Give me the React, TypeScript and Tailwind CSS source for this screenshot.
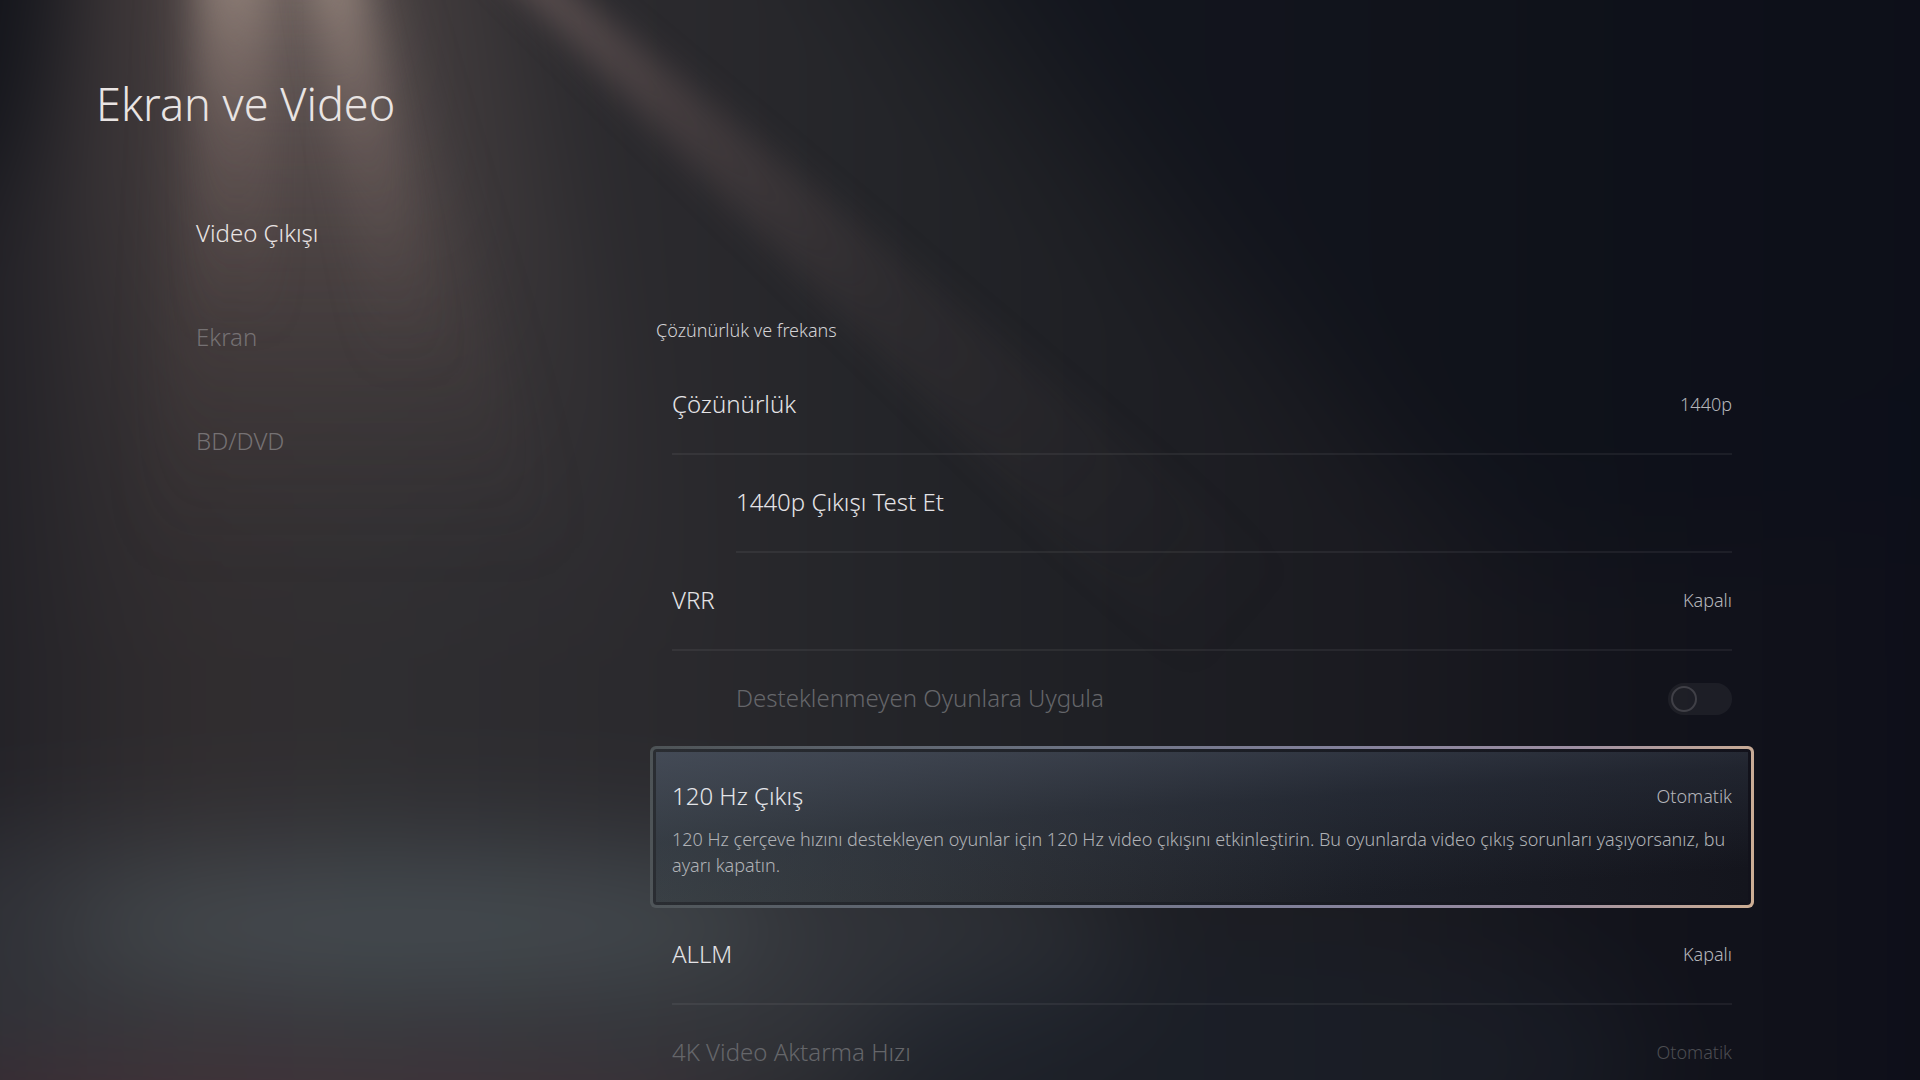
import { useState } from "react";
import { clsx } from "clsx";

type Setting = {
  id: string;
  label: string;
  value?: string;
  description?: string;
  indent?: boolean;
  disabled?: boolean;
  toggle?: boolean;
};

const TABS = [
  { id: "video-output", label: "Video Çıkışı" },
  { id: "screen", label: "Ekran" },
  { id: "bd-dvd", label: "BD/DVD" },
];

const SETTINGS: Setting[] = [
  { id: "resolution", label: "Çözünürlük", value: "1440p" },
  { id: "test-1440p", label: "1440p Çıkışı Test Et", indent: true },
  { id: "vrr", label: "VRR", value: "Kapalı" },
  {
    id: "unsupported",
    label: "Desteklenmeyen Oyunlara Uygula",
    indent: true,
    disabled: true,
    toggle: true,
  },
  {
    id: "hz120",
    label: "120 Hz Çıkış",
    value: "Otomatik",
    description:
      "120 Hz çerçeve hızını destekleyen oyunlar için 120 Hz video çıkışını etkinleştirin. Bu oyunlarda video çıkış sorunları yaşıyorsanız, bu ayarı kapatın.",
  },
  { id: "allm", label: "ALLM", value: "Kapalı" },
  {
    id: "transfer-rate",
    label: "4K Video Aktarma Hızı",
    value: "Otomatik",
    disabled: true,
  },
];

function Backdrop() {
  return (
    <svg
      className="absolute inset-0 h-full w-full"
      viewBox="0 0 1920 1080"
      preserveAspectRatio="none"
      aria-hidden
    >
      <defs>
        <linearGradient id="base" x1="0" y1="0" x2="1" y2="0">
          <stop offset="0.13" stopColor="#201f25" />
          <stop offset="0.17" stopColor="#29272b" />
          <stop offset="0.22" stopColor="#312d2f" />
          <stop offset="0.29" stopColor="#2f2e31" />
          <stop offset="0.4" stopColor="#2a292d" />
          <stop offset="0.47" stopColor="#242529" />
          <stop offset="0.56" stopColor="#1e1f24" />
          <stop offset="0.66" stopColor="#1a1a20" />
          <stop offset="0.75" stopColor="#12131b" />
          <stop offset="0.84" stopColor="#0f101a" />
          <stop offset="0.88" stopColor="#0b0c18" />
        </linearGradient>
        <linearGradient id="lamp" x1="0" y1="0" x2="0" y2="1">
          <stop offset="0" stopColor="#b09c92" stopOpacity="0.48" />
          <stop offset="0.3" stopColor="#907c76" stopOpacity="0.3" />
          <stop offset="0.6" stopColor="#705c58" stopOpacity="0.2" />
          <stop offset="1" stopColor="#5a4a48" stopOpacity="0" />
        </linearGradient>
        <linearGradient id="streak" x1="0" y1="0" x2="0" y2="1">
          <stop offset="0" stopColor="#b8a598" stopOpacity="0.5" />
          <stop offset="0.5" stopColor="#967f78" stopOpacity="0.18" />
          <stop offset="1" stopColor="#7a6662" stopOpacity="0" />
        </linearGradient>
        <linearGradient id="halo" x1="0" y1="0" x2="0" y2="1">
          <stop offset="0" stopColor="#6b5a57" stopOpacity="0.4" />
          <stop offset="0.5" stopColor="#5c504f" stopOpacity="0.3" />
          <stop offset="1" stopColor="#4a4343" stopOpacity="0" />
        </linearGradient>
        <linearGradient
          id="beam"
          gradientUnits="userSpaceOnUse"
          x1="520"
          y1="0"
          x2="1240"
          y2="640"
        >
          <stop offset="0" stopColor="#8a7370" stopOpacity="0.5" />
          <stop offset="0.2" stopColor="#7a6462" stopOpacity="0.32" />
          <stop offset="0.5" stopColor="#6a5656" stopOpacity="0.14" />
          <stop offset="1" stopColor="#5c4c4b" stopOpacity="0" />
        </linearGradient>
        <filter
          id="ambient"
          filterUnits="userSpaceOnUse"
          x="-400"
          y="-400"
          width="2720"
          height="1880"
          colorInterpolationFilters="sRGB"
        >
          <feGaussianBlur stdDeviation="50" />
        </filter>
        <filter
          id="soft"
          x="-50%"
          y="-50%"
          width="200%"
          height="200%"
          colorInterpolationFilters="sRGB"
        >
          <feGaussianBlur stdDeviation="26" />
        </filter>
        <filter
          id="thin"
          x="-100%"
          y="-50%"
          width="300%"
          height="200%"
          colorInterpolationFilters="sRGB"
        >
          <feGaussianBlur stdDeviation="16" />
        </filter>
      </defs>

      <g filter="url(#ambient)">
        <rect
          x="-400"
          y="-400"
          width="2720"
          height="1880"
          fill="url(#base)"
        />

        {/* night side and the dark upper corner */}
        <polygon
          points="560,-300 2300,-300 2300,300 1400,500"
          fill="#10131b"
          opacity="0.35"
        />
        <polygon
          points="760,-300 2300,-300 2300,500 1500,560"
          fill="#0b101b"
          opacity="0.45"
        />
        <polygon
          points="-300,-300 130,-300 30,120 -300,500"
          fill="#0d1017"
          opacity="0.75"
        />
        <polygon
          points="90,-200 440,-200 680,660 60,660"
          fill="url(#halo)"
        />

        {/* horizon glow */}
        <ellipse
          cx="400"
          cy="960"
          rx="740"
          ry="150"
          fill="#41454c"
          opacity="0.45"
        />
        <ellipse
          cx="420"
          cy="925"
          rx="360"
          ry="50"
          fill="#5a686c"
          opacity="0.45"
        />
        <ellipse
          cx="1250"
          cy="1060"
          rx="400"
          ry="120"
          fill="#1a2029"
          opacity="0.6"
        />
        <ellipse
          cx="180"
          cy="1140"
          rx="560"
          ry="70"
          fill="#52303a"
          opacity="0.5"
        />
      </g>

      {/* light from above */}
      <polygon
        points="195,-60 365,-60 560,560 150,560"
        fill="url(#lamp)"
        filter="url(#soft)"
      />
      <polygon
        points="200,-60 265,-60 280,340 195,340"
        fill="url(#streak)"
        filter="url(#thin)"
      />
      <polygon
        points="305,-60 350,-60 450,380 370,380"
        fill="url(#streak)"
        filter="url(#thin)"
      />
      <polygon
        points="470,-60 510,-60 1330,610 1200,680"
        fill="url(#beam)"
        filter="url(#thin)"
      />
    </svg>
  );
}

function RowText({ item }: { item: Setting }) {
  return (
    <>
      <span className="text-2xl">{item.label}</span>
      {item.value && (
        <span
          className={clsx(
            "text-lg leading-8",
            item.disabled ? "text-[#4c4d52]" : "text-[#b4b5ba]",
          )}
        >
          {item.value}
        </span>
      )}
    </>
  );
}

function SettingRow({
  item,
  focused,
  onFocus,
}: {
  item: Setting;
  focused: boolean;
  onFocus: () => void;
}) {
  if (focused) {
    return (
      <li className="relative z-10 -mx-[22px] -mt-[3px] -mb-px rounded-md bg-[linear-gradient(98deg,#4d5356_0%,#6a7180_35%,#81809a_60%,#9d8fa3_82%,#cdae94_100%)] p-[3px]">
        <button
          type="button"
          className="block w-full rounded-sm bg-[linear-gradient(90deg,#2a2d32,#1c1f26_50%,#12121b)] p-[3px] text-left outline-none"
        >
          <span className="block bg-[linear-gradient(176deg,#454c5acc_0%,#2f364377_40%,#00000000_85%),linear-gradient(90deg,#3c4245_0%,#2a2d32_35%,#1b1e26_65%,#14151d_100%)] px-4 pt-7 pb-6">
            <span className="flex items-center justify-between text-[#e4e5e9]">
              <RowText item={item} />
            </span>
            <span className="mt-[14px] block text-lg leading-[26px] text-[#b0b2b6]">
              {item.description}
            </span>
          </span>
        </button>
      </li>
    );
  }

  return (
    <li
      className={clsx(
        "border-b-2 border-white/6",
        item.indent && "ml-16",
        item.disabled ? "text-[#65666a]" : "text-[#e4e3e6]",
      )}
    >
      {item.toggle ? (
        <label className="flex h-24 items-center justify-between">
          <span className="pb-0.5 text-2xl">{item.label}</span>
          <input
            type="checkbox"
            role="switch"
            disabled={item.disabled}
            className="flex h-8 w-16 appearance-none items-center rounded-full bg-white/5 px-[3px] before:size-[26px] before:rounded-full before:border-2 before:border-[#404047] before:content-['']"
          />
        </label>
      ) : (
        <button
          type="button"
          disabled={item.disabled}
          onClick={onFocus}
          className="flex h-24 w-full items-center justify-between pb-0.5 text-left outline-none"
        >
          <RowText item={item} />
        </button>
      )}
    </li>
  );
}

export default function App() {
  const [tab, setTab] = useState("video-output");
  const [focusedId, setFocusedId] = useState("hz120");

  return (
    <div className="relative h-screen overflow-hidden bg-[#14151d] font-['Noto_Sans','Open_Sans',sans-serif] font-light">
      <Backdrop />

      <div className="relative pt-[72px] pr-[188px] pl-24">
        <h1 className="text-[45px] leading-16 text-[#e9e4e3]">
          Ekran ve Video
        </h1>

        <div className="flex">
          <nav className="w-[560px] shrink-0 pt-[45px] pl-[100px]">
            <ul>
              {TABS.map((t) => (
                <li key={t.id}>
                  <a
                    href={`#${t.id}`}
                    onClick={() => setTab(t.id)}
                    className={clsx(
                      "flex h-26 items-center text-2xl",
                      t.id === tab ? "text-[#e9e4e3]" : "text-[#757173]",
                    )}
                  >
                    {t.label}
                  </a>
                </li>
              ))}
            </ul>
          </nav>

          <main className="min-w-0 flex-1 pt-[180px]">
            <h2 className="text-lg leading-7 text-[#d3d2d5]">
              Çözünürlük ve frekans
            </h2>
            <ul className="mt-[13px] pl-4">
              {SETTINGS.map((item) => (
                <SettingRow
                  key={item.id}
                  item={item}
                  focused={item.id === focusedId}
                  onFocus={() => setFocusedId(item.id)}
                />
              ))}
            </ul>
          </main>
        </div>
      </div>
    </div>
  );
}
